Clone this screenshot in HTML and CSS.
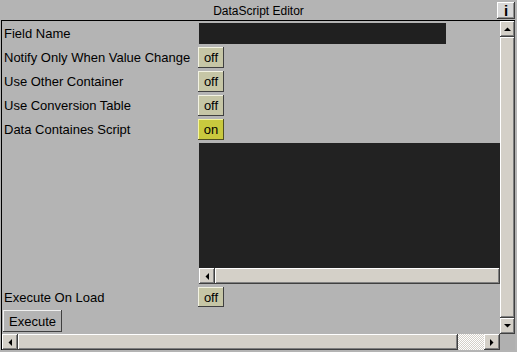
FILE: index.html
```html
<!DOCTYPE html>
<html lang="en">
<head>
    <meta charset="UTF-8">
    <title>DataScript Editor</title>
    <link rel="stylesheet" href="styles.css">
</head>
<body>
    <div class="title">
        <span class="title-text">DataScript Editor</span>
        <button class="info">i</button>
    </div>
    <div class="frame">
        <div class="content">
            <div class="row">
                <span class="label">Field Name</span>
                <div class="field"></div>
            </div>
            <div class="row">
                <span class="label">Notify Only When Value Change</span>
                <button class="toggle">off</button>
            </div>
            <div class="row">
                <span class="label">Use Other Container</span>
                <button class="toggle">off</button>
            </div>
            <div class="row">
                <span class="label">Use Conversion Table</span>
                <button class="toggle">off</button>
            </div>
            <div class="row">
                <span class="label">Data Containes Script</span>
                <button class="toggle on">on</button>
            </div>
            <div class="script">
                <div class="script-area"></div>
                <div class="hscroll small">
                    <div class="sb-btn"><svg width="4" height="7" viewBox="0 0 4 7"><polygon points="4,0 4,7 0.5,3.5" fill="#000"/></svg></div>
                    <div class="sb-thumb"></div>
                </div>
            </div>
            <div class="row short">
                <span class="label">Execute On Load</span>
                <button class="toggle">off</button>
            </div>
            <button class="execute">Execute</button>
        </div>
        <div class="vscroll">
            <div class="sb-btn"><svg width="7" height="4" viewBox="0 0 7 4"><polygon points="0,4 7,4 3.5,0.5" fill="#000"/></svg></div>
            <div class="sb-thumb"></div>
            <div class="sb-btn"><svg width="7" height="4" viewBox="0 0 7 4"><polygon points="0,0 7,0 3.5,3.5" fill="#000"/></svg></div>
        </div>
        <div class="hscroll">
            <div class="sb-btn"><svg width="4" height="7" viewBox="0 0 4 7"><polygon points="4,0 4,7 0.5,3.5" fill="#000"/></svg></div>
            <div class="sb-thumb wide"></div>
            <div class="sb-track"></div>
            <div class="sb-btn"><svg width="4" height="7" viewBox="0 0 4 7"><polygon points="0,0 0,7 3.5,3.5" fill="#000"/></svg></div>
        </div>
        <div class="corner"></div>
    </div>
</body>
</html>
```

FILE: styles.css
```css
body{
    margin:0px;
    height:352px;
    overflow:hidden;
    display:flex;
    flex-direction:column;
    background-color:#b4b4b4;
    font-family:"Liberation Sans", Arial, sans-serif;
    font-size:13px;
    color:#000;
}
button{
    font-family:inherit;
    font-size:13px;
    color:#000;
    padding:0px;
    margin:0px;
}
.title{
    height:20px;
    display:flex;
    padding-left:20px;
    padding-right:2px;
    flex:none;
}
.title-text{
    flex:1;
    text-align:center;
    font-size:12px;
    line-height:22px;
}
.info{
    width:18px;
    height:17px;
    margin-top:2px;
    border:none;
    background-color:#d8d8d8;
    font-weight:bold;
    font-size:15px;
    line-height:17px;
    box-shadow: inset -1px -1px #404040, inset 1px 1px #fff, inset -2px -2px #909090;
}
.frame{
    flex:1;
    min-height:0;
    margin:0px 2px 2px 1px;
    border-top:1px solid #000;
    border-left:1px solid #000;
    display:grid;
    grid-template-columns:1fr 15px;
    grid-template-rows:1fr 16px;
}
.content{
    overflow:hidden;
    padding:2px 0px 0px 2px;
    display:flex;
    flex-direction:column;
    gap:3px;
}
.row{
    height:21px;
    display:flex;
    align-items:center;
    flex:none;
}
.row.short{
    height:20px;
}
.label{
    width:194px;
    flex:none;
    white-space:nowrap;
}
.field{
    width:247px;
    height:21px;
    margin-left:1px;
    background-color:#202020;
}
.toggle{
    width:26px;
    height:100%;
    border:none;
    background-color:#c6c6a6;
    box-shadow: inset -1px -1px #404040, inset 1px 1px #f2f2e2;
}
.toggle.on{
    background-color:#c9c93e;
    box-shadow: inset -1px -1px #505020, inset 1px 1px #f4f4a0;
}
.script{
    margin-left:195px;
    display:flex;
    flex-direction:column;
    flex:none;
}
.script-area{
    height:125px;
    background-color:#222222;
}
.execute{
    align-self:flex-start;
    width:59px;
    height:22px;
    margin-left:-1px;
    border:none;
    background-color:#b4b4b4;
    box-shadow: inset -1px -1px #404040, inset 1px 1px #f0f0f0;
}
.vscroll{
    display:flex;
    flex-direction:column;
    background-color:#d4d0c8;
}
.hscroll{
    display:flex;
    background-color:#d4d0c8;
}
.hscroll.small{
    height:16px;
}
.sb-btn{
    width:15px;
    height:16px;
    flex:none;
    display:flex;
    align-items:center;
    justify-content:center;
    background-color:#d4d0c8;
    box-shadow: inset -1px -1px #404040, inset 1px 1px #fff, inset -2px -2px #808080;
}
.hscroll .sb-btn{
    width:16px;
}
.sb-thumb{
    flex:1;
    background-color:#d4d0c8;
    box-shadow: inset -1px -1px #404040, inset 1px 1px #fff, inset -2px -2px #808080;
}
.sb-thumb.wide{
    flex:none;
    width:440px;
}
.sb-track{
    flex:1;
    background-image: repeating-conic-gradient(#d4d0c8 0 25%, #fff 0 50%);
    background-size:2px 2px;
}
.corner{
    background-color:#b0b0b0;
}
```
